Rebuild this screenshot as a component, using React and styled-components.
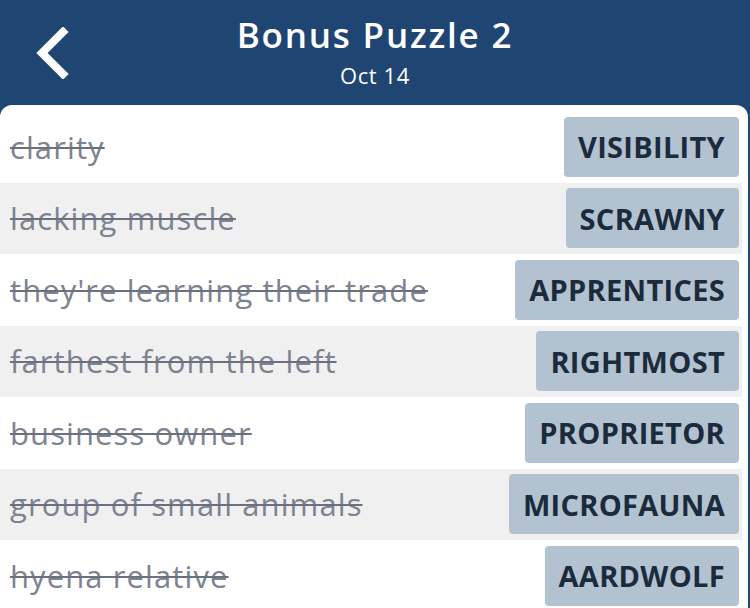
import styled, { createGlobalStyle } from 'styled-components';

const GlobalStyle = createGlobalStyle`
  html, body {
    margin: 0;
    padding: 0;
    background: #1f4672;
  }
  body {
    font-family: 'Open Sans', 'Noto Sans', sans-serif;
  }
`;

const Screen = styled.div`
  width: 750px;
  height: 608px;
  display: flex;
  flex-direction: column;
  background: #1f4672;
  overflow: hidden;
`;

const Header = styled.header`
  height: 105px;
  flex: none;
  display: grid;
  grid-template-columns: 110px 1fr 110px;
  align-items: center;
  color: #fff;
`;

const BackButton = styled.button`
  width: 110px;
  height: 105px;
  border: 0;
  padding: 0 0 0 34px;
  background: transparent;
  display: flex;
  align-items: center;
  cursor: pointer;
`;

const Titles = styled.div`
  display: flex;
  flex-direction: column;
  align-items: center;
  padding-bottom: 2px;
`;

const Title = styled.h1`
  margin: 0;
  font-size: 35px;
  font-weight: 600;
  letter-spacing: 1.8px;
  line-height: 44px;
`;

const Subtitle = styled.div`
  margin-top: 3px;
  font-size: 22px;
  letter-spacing: 0.6px;
  line-height: 30px;
`;

const Panel = styled.main`
  flex: 1;
  background: #fff;
  border-radius: 12px 12px 0 0;
  margin-right: 2px;
  padding: 6px 6px 0 0;
`;

const Row = styled.div`
  height: 71.5px;
  display: flex;
  align-items: center;
  justify-content: space-between;
  background: ${(p) => (p.shaded ? '#f0f0f0' : 'transparent')};
  padding: 0 3px 0 10px;
`;

const Clue = styled.span`
  font-size: 31px;
  letter-spacing: 1.1px;
  color: #7d8390;
  text-decoration: line-through;
  text-decoration-thickness: 2px;
  text-decoration-color: #6a717d;
`;

const Answer = styled.span`
  height: 60px;
  display: flex;
  align-items: center;
  padding: 0 14px;
  background: #b2c2d0;
  border-radius: 4px;
  color: #1b2b3c;
  font-size: 29px;
  font-weight: 700;
  letter-spacing: 0.3px;
`;

const rows = [
  ['clarity', 'VISIBILITY'],
  ['lacking muscle', 'SCRAWNY'],
  ["they're learning their trade", 'APPRENTICES'],
  ['farthest from the left', 'RIGHTMOST'],
  ['business owner', 'PROPRIETOR'],
  ['group of small animals', 'MICROFAUNA'],
  ['hyena relative', 'AARDWOLF'],
];

export default function App() {
  return (
    <>
      <GlobalStyle />
      <Screen>
        <Header>
          <BackButton aria-label="Back">
            <svg width="36" height="52" viewBox="0 0 36 52">
              <polyline
                points="29,5 8,26 29,47"
                fill="none"
                stroke="#fff"
                strokeWidth="8"
                strokeLinecap="square"
              />
            </svg>
          </BackButton>
          <Titles>
            <Title>Bonus Puzzle 2</Title>
            <Subtitle>Oct 14</Subtitle>
          </Titles>
          <div />
        </Header>
        <Panel>
          {rows.map(([clue, answer], i) => (
            <Row key={answer} shaded={i % 2 === 1}>
              <Clue>{clue}</Clue>
              <Answer>{answer}</Answer>
            </Row>
          ))}
        </Panel>
      </Screen>
    </>
  );
}
